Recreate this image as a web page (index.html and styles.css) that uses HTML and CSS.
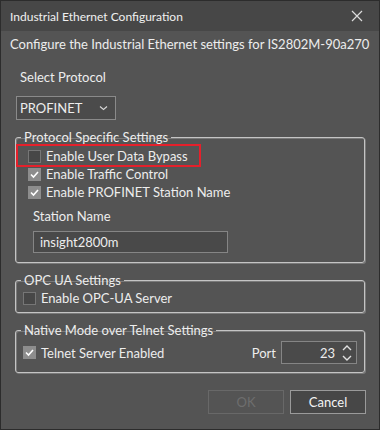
FILE: index.html
```html
<!DOCTYPE html>
<html>
<head>
<meta charset="utf-8">
<link rel="stylesheet" href="styles.css">
</head>
<body>
<div class="window">
  <div class="titlebar">
    <span class="title">Industrial Ethernet Configuration</span>
    <svg class="close" width="12" height="12" viewBox="0 0 12 12"><path d="M1 1L11 11M11 1L1 11" stroke="#dcdcdc" stroke-width="1.2" fill="none"/></svg>
  </div>
  <div class="body">
    <p class="intro">Configure the Industrial Ethernet settings for IS2802M-90a270</p>
    <div class="label sel">Select Protocol</div>
    <div class="combo"><span>PROFINET</span><svg width="9" height="6" viewBox="0 0 9 6"><path d="M1 1.5L4.5 4.5L8 1.5" stroke="#d8d8d8" stroke-width="1.1" fill="none"/></svg></div>

    <fieldset class="group g1">
      <legend>Protocol Specific Settings</legend>
      <div class="check hl"><span class="box"></span>Enable User Data Bypass</div>
      <div class="check"><span class="box on"><svg width="13" height="13" viewBox="0 0 13 13"><path d="M3 6.5L5.5 9L10 4" stroke="#fff" stroke-width="1.6" fill="none"/></svg></span>Enable Traffic Control</div>
      <div class="check"><span class="box on"><svg width="13" height="13" viewBox="0 0 13 13"><path d="M3 6.5L5.5 9L10 4" stroke="#fff" stroke-width="1.6" fill="none"/></svg></span>Enable PROFINET Station Name</div>
      <div class="label station">Station Name</div>
      <div class="textbox">insight2800m</div>
    </fieldset>

    <fieldset class="group g2">
      <legend>OPC UA Settings</legend>
      <div class="check"><span class="box"></span>Enable OPC-UA Server</div>
    </fieldset>

    <fieldset class="group g3">
      <legend>Native Mode over Telnet Settings</legend>
      <div class="telnet">
        <div class="check"><span class="box on"><svg width="13" height="13" viewBox="0 0 13 13"><path d="M3 6.5L5.5 9L10 4" stroke="#fff" stroke-width="1.6" fill="none"/></svg></span>Telnet Server Enabled</div>
        <div class="port">
          <span>Port</span>
          <div class="spin"><span class="val">23</span><svg width="10" height="18" viewBox="0 0 10 18"><path d="M1 6L5 2L9 6M1 12L5 16L9 12" stroke="#e0e0e0" stroke-width="1.4" fill="none"/></svg></div>
        </div>
      </div>
    </fieldset>

    <div class="buttons">
      <div class="btn disabled">OK</div>
      <div class="btn cancel">Cancel</div>
    </div>
  </div>
</div>
</body>
</html>
```

FILE: styles.css
```css
html, body { margin: 0; padding: 0; background: #535353; }
body { font-family: "Lato", "Noto Sans", sans-serif; font-size: 13px; color: #ededed; }
.window {
  width: 380px; height: 430px; box-sizing: border-box;
  border: 1px solid #2c2c2c; background: #545454;
  display: flex; flex-direction: column;
}
.titlebar {
  height: 30px; background: #474747; display: flex; align-items: center;
  justify-content: space-between; padding: 0 16px 0 9px; flex: none;
}
.title { font-size: 12px; color: #f0f0f0; }
.close { display: block; }
.body { padding: 0 14px; display: flex; flex-direction: column; }
.intro { margin: 5px 0 0 -5px; line-height: 16px; white-space: nowrap; }
.label { line-height: 16px; }
.sel { margin: 17px 0 0 5px; }
.combo {
  margin: 11px 0 0 1px; width: 100px; height: 24px; box-sizing: border-box;
  border: 1px solid #8a8a8a; background: #4b4b4b;
  display: flex; align-items: center; justify-content: space-between;
  padding: 0 7px 0 3px;
}
.group {
  margin: 9px 0 0 0; border: 1px solid #c4c4c4; border-radius: 3px;
  box-shadow: 1px 1px 0 #7a7a7a, inset 1px 1px 0 #7a7a7a;
  padding: 0 7px; min-width: 0;
}
.group legend { padding: 0 3px; line-height: 16px; margin-left: -2px; }
.g1 { padding: 0 7px 9px 12px; }
.g1 legend { margin-left: -7px; }
.check { display: flex; align-items: center; height: 18px; white-space: nowrap; }
.g1 .check:first-of-type { margin-top: 2px; }
.box {
  width: 13px; height: 13px; box-sizing: border-box; margin-right: 5px;
  border: 1px solid #767676; background: #474747; flex: none; display: block;
}
.box.on { background: #8d8d8d; border-color: #8d8d8d; }
.box svg { display: block; margin: -1px; }
.hl { position: relative; }
.hl::after {
  content: ""; position: absolute; left: -12px; top: -3px; width: 185px; height: 23px;
  box-sizing: border-box; border: 2px solid #e5202b;
}
.station { margin: 7px 0 0 5px; }
.textbox {
  margin: 7px 0 0 5px; width: 195px; height: 22px; box-sizing: border-box;
  border: 1px solid #858585; background: #494949; padding-left: 6px;
  display: flex; align-items: center;
}
.g2 { padding-bottom: 5px; }
.g2 .check { margin-top: 1px; }
.g3 { padding-bottom: 8px; }
.telnet { display: flex; align-items: center; justify-content: space-between; margin-top: 3px; height: 23px; }
.port { display: flex; align-items: center; gap: 5px; }
.spin {
  width: 76px; height: 23px; box-sizing: border-box; border: 1px solid #858585;
  background: #4a4a4a; display: flex; align-items: center; justify-content: flex-end;
  padding-right: 4px; gap: 7px;
}
.spin svg { display: block; }
.buttons { display: flex; justify-content: flex-end; gap: 6px; margin: 17px -1px 0 0; }
.btn {
  width: 76px; height: 24px; box-sizing: border-box; display: flex;
  align-items: center; justify-content: center;
}
.disabled { border: 1px solid #686868; color: #6e6e6e; }
.cancel { border: 1px solid #9a9a9a; background: #474747; color: #f4f4f4; }
```
